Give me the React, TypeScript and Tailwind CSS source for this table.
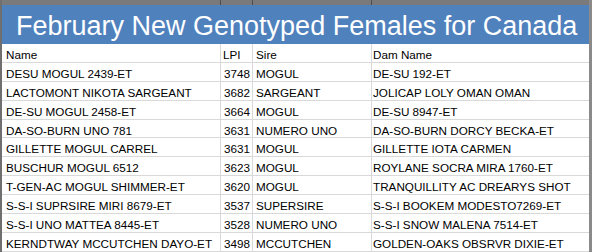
const rows: [string, string, string, string][] = [
  ['DESU MOGUL 2439-ET', '3748', 'MOGUL', 'DE-SU 192-ET'],
  ['LACTOMONT NIKOTA SARGEANT', '3682', 'SARGEANT', 'JOLICAP LOLY OMAN OMAN'],
  ['DE-SU MOGUL 2458-ET', '3664', 'MOGUL', 'DE-SU 8947-ET'],
  ['DA-SO-BURN UNO 781', '3631', 'NUMERO UNO', 'DA-SO-BURN DORCY BECKA-ET'],
  ['GILLETTE MOGUL CARREL', '3631', 'MOGUL', 'GILLETTE IOTA CARMEN'],
  ['BUSCHUR MOGUL 6512', '3623', 'MOGUL', 'ROYLANE SOCRA MIRA 1760-ET'],
  ['T-GEN-AC MOGUL SHIMMER-ET', '3620', 'MOGUL', 'TRANQUILLITY AC DREARYS SHOT'],
  ['S-S-I SUPRSIRE MIRI 8679-ET', '3537', 'SUPERSIRE', 'S-S-I BOOKEM MODESTO7269-ET'],
  ['S-S-I UNO MATTEA 8445-ET', '3528', 'NUMERO UNO', 'S-S-I SNOW MALENA 7514-ET'],
  ['KERNDTWAY MCCUTCHEN DAYO-ET', '3498', 'MCCUTCHEN', 'GOLDEN-OAKS OBSRVR DIXIE-ET'],
];

export default function App() {
  return (
    <div className="w-[592px] h-[252px] overflow-hidden bg-white flex text-black font-['Liberation_Sans',Arial,sans-serif]">
      {/* left frame edge */}
      <div className="w-[2px] bg-[#6f6f6f]" />

      <div className="flex-1 flex flex-col">
        {/* column header strip */}
        <div className="h-[5px] grid grid-cols-[219px_32px_119px_1fr] bg-[#7a7a7a]">
          <div className="border-r border-[#4d4d4d]" />
          <div className="border-r border-[#4d4d4d]" />
          <div className="border-r border-[#4d4d4d]" />
          <div />
        </div>

        {/* title band */}
        <div className="h-[39px] bg-[#4f81bd] text-white text-[27px] leading-none pl-[14px] pt-[8px] whitespace-nowrap">
          February New Genotyped Females for Canada
        </div>

        <Row cells={['Name', 'LPI', 'Sire', 'Dam Name']} header />
        {rows.map((r) => (
          <Row key={r[0]} cells={r} />
        ))}
      </div>

      {/* right frame edge */}
      <div className="w-[3px] bg-[#8a8a8a]" />
    </div>
  );
}

function Row({ cells, header }: { cells: string[]; header?: boolean }) {
  return (
    <div className="grid grid-cols-[219px_32px_119px_1fr] h-[19px] border-b border-[#d9d9d9] text-[11.7px] leading-none whitespace-nowrap">
      <div className="border-r border-[#d9d9d9] pl-[4px] pt-[5px]">{cells[0]}</div>
      <div className={`border-r border-[#d9d9d9] pt-[5px] ${header ? 'pl-[2px]' : 'text-right pr-[2px]'}`}>{cells[1]}</div>
      <div className="border-r border-[#d9d9d9] pl-[3px] pt-[5px]">{cells[2]}</div>
      <div className="pl-[1px] pt-[5px]">{cells[3]}</div>
    </div>
  );
}
